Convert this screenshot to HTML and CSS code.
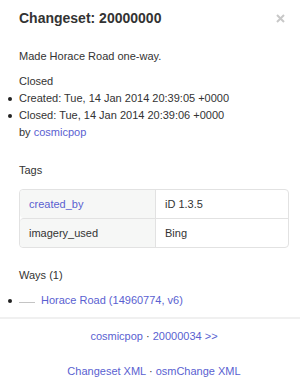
FILE: index.html
```html
<!DOCTYPE html>
<html lang="en">
  <head>
    <meta charset="UTF-8" />
    <title>Changeset 20000000</title>
    <link rel="stylesheet" href="styles.css">
  </head>
  <body>
    <div class="panel">
      <!-- Header with title and close button -->
      <div class="header">
        <h2>Changeset: 20000000</h2>
        <button type="button" class="close" aria-label="Close">
          <svg width="9" height="9" viewBox="0 0 9 9">
            <path d="M1 1 L8 8 M8 1 L1 8" stroke="#c8c8c8" stroke-width="2" fill="none" />
          </svg>
        </button>
      </div>

      <div class="body">
        <p class="comment">Made Horace Road one-way.</p>

        <div class="meta">
          <div>Closed</div>
          <ul class="list">
            <li>Created: Tue, 14 Jan 2014 20:39:05 +0000</li>
            <li>Closed: Tue, 14 Jan 2014 20:39:06 +0000</li>
          </ul>
          <div>by <a href="#">cosmicpop</a></div>
        </div>

        <h3>Tags</h3>
        <table class="tags">
          <tr>
            <td class="key"><a href="#">created_by</a></td>
            <td>iD 1.3.5</td>
          </tr>
          <tr>
            <td class="key">imagery_used</td>
            <td>Bing</td>
          </tr>
        </table>

        <h3 class="ways-title">Ways (1)</h3>
        <ul class="list ways">
          <li><span class="way-icon"></span><a href="#">Horace Road (14960774, v6)</a></li>
        </ul>
      </div>

      <!-- Footer navigation -->
      <div class="footer">
        <div class="nav"><a href="#">cosmicpop</a> · <a href="#">20000034 &gt;&gt;</a></div>
        <div class="downloads"><a href="#">Changeset XML</a> · <a href="#">osmChange XML</a></div>
      </div>
    </div>
  </body>
</html>
```

FILE: styles.css
```css
/* Base page */
body {
  margin: 0;
  background-color: #fff;
  color: #333;
  font-family: "Liberation Sans", Arial, sans-serif;
  font-size: 11px;
  line-height: 17px;
}

a {
  color: #5a5fd1;
  text-decoration: none;
}

.panel {
  width: 300px;
}

/* Header */
.header {
  display: flex;
  justify-content: space-between;
  align-items: center;
  padding: 8px 15px 0 19px;
}

.header h2 {
  margin: 0;
  font-size: 14px;
  line-height: 20px;
  font-weight: bold;
}

.close {
  display: flex;
  padding: 0;
  border: none;
  background: none;
  cursor: pointer;
}

/* Content */
.body {
  padding: 0 11px 0 19px;
}

.comment {
  margin: 20px 0 0;
}

.meta {
  margin-top: 8px;
}

.list {
  margin: 0;
  padding: 0;
  list-style: none;
}

.list li {
  position: relative;
}

.list li::before {
  content: "";
  position: absolute;
  left: -11px;
  top: 7px;
  width: 4px;
  height: 4px;
  border-radius: 50%;
  background-color: #222;
}

h3 {
  margin: 21px 0 0;
  font-size: 11px;
  line-height: 17px;
  font-weight: normal;
}

/* Tag table */
.tags {
  width: 100%;
  margin-top: 10px;
  border-collapse: separate;
  border-spacing: 0;
  border: 1px solid #e2e2e2;
  border-radius: 4px;
}

.tags td {
  height: 28px;
  padding: 0 9px;
  line-height: 28px;
}

.tags tr + tr td {
  border-top: 1px solid #e2e2e2;
}

.tags .key {
  width: 117px;
  background-color: #f6f7f6;
  border-right: 1px solid #e2e2e2;
  border-radius: 4px 0 0 4px;
}

.ways-title {
  margin-top: 19px;
}

.ways {
  margin-top: 8px;
}

.way-icon {
  display: inline-block;
  width: 16px;
  height: 1px;
  margin-right: 6px;
  vertical-align: 1px;
  background-color: #c4c4c4;
}

/* Footer */
.footer {
  margin-top: 8px;
  padding-left: 8px;
  border-top: 2px solid #f0f0f0;
  text-align: center;
}

.nav {
  margin-top: 9px;
}

.downloads {
  margin-top: 18px;
}
```
